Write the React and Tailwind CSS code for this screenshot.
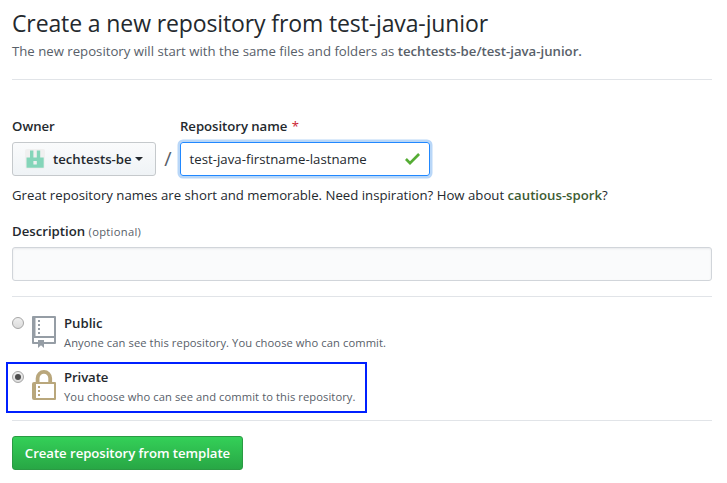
const RepoIcon = () => (
  <svg width="24" height="32" viewBox="0 0 24 32" fill="#959da5" aria-hidden="true">
    <path
      fillRule="evenodd"
      d="M1 0h22a1 1 0 0 1 1 1v26a1 1 0 0 1-1 1H12v4l-3-2.700L6 32v-4H1a1 1 0 0 1-1-1V1a1 1 0 0 1 1-1zM3.500 2v18H22V2zM2 22v4h4v-2h6v2h10v-4z"
    />
    <path d="M6 4h2v2H6zM6 8h2v2H6zM6 12h2v2H6zM6 16h2v2H6z" />
  </svg>
);

const LockIcon = () => (
  <svg width="24" height="30" viewBox="0 0 24 30" fill="#b9a77c" aria-hidden="true">
    <path
      fillRule="evenodd"
      d="M3.700 12V8.200a8.200 8.200 0 0 1 16.400 0V12H23a1 1 0 0 1 1 1v16a1 1 0 0 1-1 1H2a2 2 0 0 1-2-2V14a2 2 0 0 1 2-2zM7.500 12h8.800V8.200a4.400 4.400 0 0 0-8.800 0zM4 14v14h18V14z"
    />
    <path d="M6 16h2v2H6zM6 20h2v2H6zM6 24h2v2H6z" />
  </svg>
);

const Avatar = () => (
  <svg width="20" height="20" viewBox="0 0 20 20" aria-hidden="true">
    <rect width="20" height="20" rx="2" fill="#f0f0f0" />
    <path
      fill="#84d5b9"
      fillRule="evenodd"
      d="M5 1.500h3.400v7h3.400v-7h3.400v7h3.500v10.300H1.500V8.500H5zM8.400 12v3.400h3.400V12z"
    />
  </svg>
);

const Radio = ({ checked }) => (
  <span className="flex size-3 items-center justify-center rounded-full border border-[#a5a5a5] bg-linear-to-b from-[#efefef] to-[#dcdcdc]">
    {checked && <span className="size-1.5 rounded-full bg-[#4d4d4d]" />}
  </span>
);

export default function App() {
  return (
    <main className="h-[483px] w-[727px] overflow-hidden bg-white pr-[15px] pl-3 font-['Open_Sans',sans-serif] text-[13.2px] text-[#24292e]">
      <header className="h-20 border-b border-[#e1e4e8] pt-2">
        <h1 className="h-8 text-[23px] leading-[31px] tracking-[-0.12px] whitespace-nowrap">Create a new repository from test-java-junior</h1>
        <p className="h-[22px] leading-[22px] whitespace-nowrap text-[#586069]">
          The new repository will start with the same files and folders as <strong className="font-semibold">techtests-be/test-java-junior.</strong>
        </p>
      </header>

      <div className="flex pt-9">
        <div className="w-36">
          <div className="h-[26px] leading-5 font-semibold">Owner</div>
          <button className="flex h-[34px] w-full items-center rounded-[3px] border border-[#c5c9cc] bg-linear-to-b from-[#fafbfc] to-[#eff3f6] pl-3 font-semibold">
            <Avatar />
            <span className="ml-2 pt-px whitespace-nowrap">techtests-be</span>
            <span className="ml-[3px] border-x-4 border-t-4 border-x-transparent border-t-[#24292e]" />
          </button>
        </div>
        <div className="w-6 pt-[27px] text-center text-[20px] leading-[32px] text-[#586069]">/</div>
        <div className="w-[250px]">
          <div className="h-[26px] leading-5 font-semibold tracking-[-0.05px]">
            Repository name <span className="ml-px font-normal text-[#cb2431]">*</span>
          </div>
          <div className="flex h-[34px] items-center justify-between rounded-[3px] border border-[#2188ff] pr-[9px] pl-[8.5px] shadow-[0_0_0_2.5px_#b9d7f8]">
            <span className="pt-px tracking-[0.03px]">test-java-firstname-lastname</span>
            <svg width="15" height="12" viewBox="0 3.5 12 9.5" preserveAspectRatio="none" fill="#55ac34" aria-hidden="true">
              <path d="M12 5l-8 8-4-4 1.5-1.5L4 10l6.500-6.500z" />
            </svg>
          </div>
        </div>
      </div>

      <p className="mt-2 h-[22px] leading-[22px] whitespace-nowrap">
        Great repository names are short and memorable. Need inspiration? How about <strong className="font-semibold text-[#3d5c33]">cautious-spork</strong>?
      </p>

      <div className="mt-[15px] h-[26px] leading-5 font-semibold">
        Description <span className="text-[11.2px] font-normal tracking-[0.3px] text-[#586069]">(optional)</span>
      </div>
      <div className="h-[34px] rounded-[3px] border border-[#d1d5da] bg-[#fafbfc] shadow-[inset_0_1px_2px_rgba(27,31,35,0.075)]" />

      <div className="mt-[15px] flex h-[66px] border-t border-[#e1e4e8]">
        <div className="w-5 pt-5"><Radio /></div>
        <div className="w-8 pt-[19px]"><RepoIcon /></div>
        <div className="pt-4">
          <div className="leading-5 font-semibold">Public</div>
          <div className="text-[11.2px] leading-[19px] tracking-[0.075px] text-[#586069]">Anyone can see this repository. You choose who can commit.</div>
        </div>
      </div>

      <div className="-ml-1.5 flex h-[51px] w-[361px] border-2 border-[#0020ff] pl-1">
        <div className="w-5 pt-[7px]"><Radio checked /></div>
        <div className="w-8 pt-1.5"><LockIcon /></div>
        <div className="pt-[3px]">
          <div className="leading-5 font-semibold tracking-[-0.1px]">Private</div>
          <div className="text-[11.2px] leading-[19px] tracking-[0.075px] whitespace-nowrap text-[#586069]">You choose who can see and commit to this repository.</div>
        </div>
      </div>

      <div className="mt-[7px] border-t border-[#e1e4e8] pt-[15px]">
        <button className="h-[34px] w-[231px] rounded-[3px] border border-[#2a9a43] bg-linear-to-b from-[#34d058] to-[#28a745] pt-px font-semibold tracking-[-0.05px] whitespace-nowrap text-white">
          Create repository from template
        </button>
      </div>
    </main>
  );
}
